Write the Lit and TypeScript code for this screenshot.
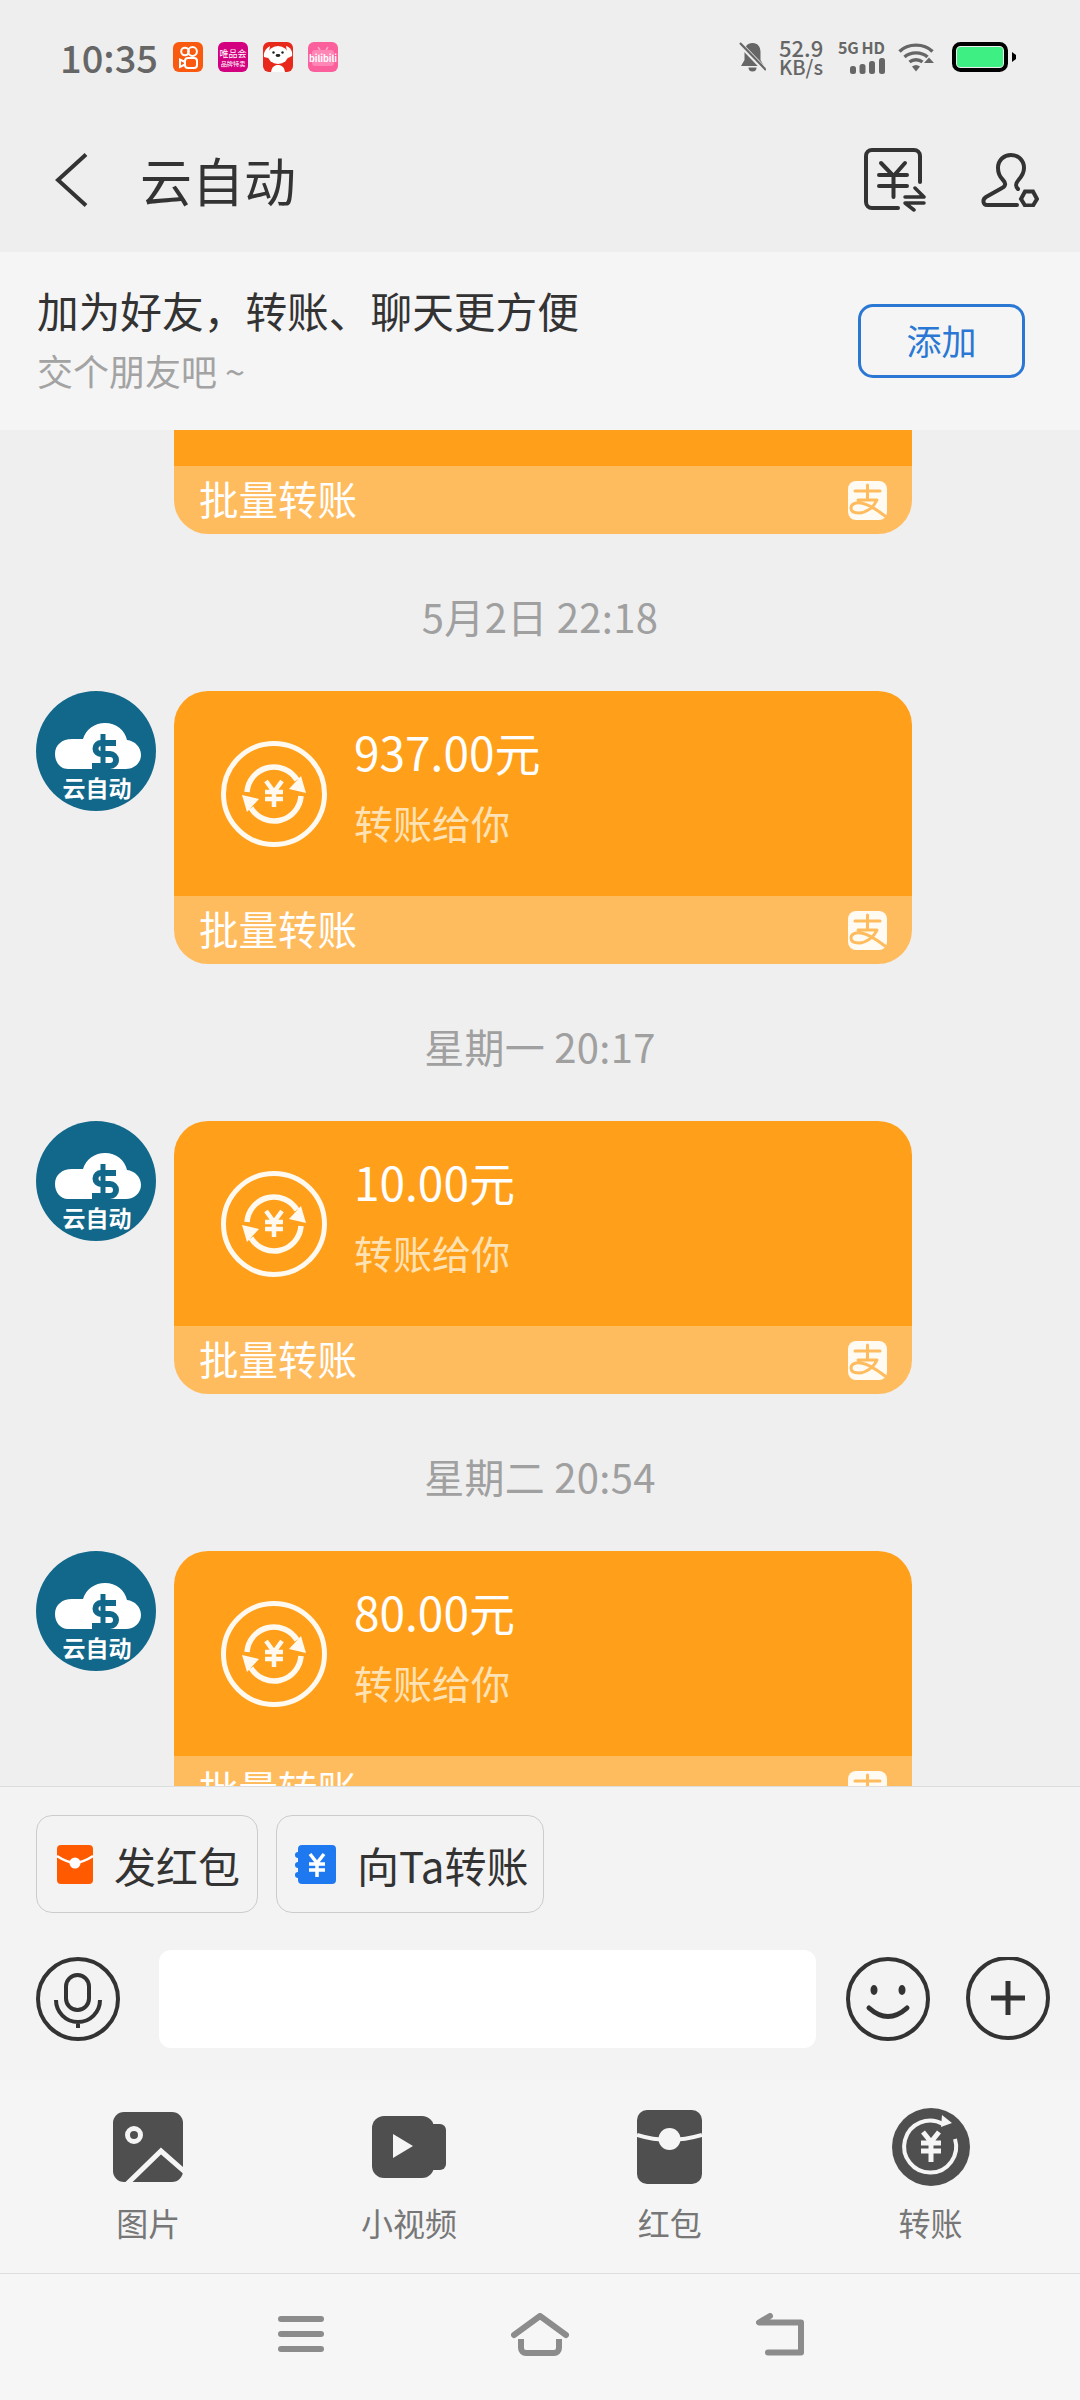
import { LitElement, css, html } from "lit";
import { customElement } from "lit/decorators.js";

const bannerTitle = "加为好友\uFF0C转账、聊天更方便";

const messages = [
  { time: "5月2日 22:18", amount: "937.00元" },
  { time: "星期一 20:17", amount: "10.00元" },
  { time: "星期二 20:54", amount: "80.00元" },
];

const avatar = html`
  <svg class="avatar" width="120" height="120" viewBox="0 0 120 120">
    <circle cx="60" cy="60" r="60" fill="#12688a" />
    <path d="M32 78C24 78 19 71 19 63C19 54 26 48 36 48H47C50 38 59 32 69 32C80 32 89 39 91 49C99 50 105 56 105 64C105 72 98 78 90 78Z" fill="#fff" />
    <path d="M80 52H65a5.5 5.500 0 0 0 0 11H74a6 6 0 0 1 0 12H56" fill="none" stroke="#12688a" stroke-width="6" />
    <path d="M67 43V85" stroke="#12688a" stroke-width="5" />
    <text x="61" y="106" font-size="23" font-weight="700" fill="#fff" text-anchor="middle">云自动</text>
  </svg>
`;

const coin = html`
  <svg class="coin" width="106" height="106" viewBox="0 0 106 106" fill="none" stroke="#fff9f0">
    <circle cx="53" cy="53" r="50.500" stroke-width="5" />
    <path d="M26 51A27 27 0 0 1 76 39" stroke-width="5.500" />
    <path d="M85 52L68 48L80 35Z" fill="#fff9f0" stroke="none" />
    <g transform="rotate(180 53 53)">
      <path d="M26 51A27 27 0 0 1 76 39" stroke-width="5.500" />
      <path d="M85 52L68 48L80 35Z" fill="#fff9f0" stroke="none" />
    </g>
    <path d="M45 40L53 51L61 40M44 51H62M44 58H62M53 51V66" stroke-width="4.500" />
  </svg>
`;

const alipay = html`
  <svg width="39" height="39" viewBox="0 0 39 39" fill="none">
    <rect width="39" height="39" rx="8" fill="#fffaf2" />
    <path d="M7 10H32M19.500 4V19M10 19H29C26 26 18 32 11 32C6 32 3 30 3 27C3 23 8 21 13 22C20 23 28 28 37 35" stroke="#ffbc5f" stroke-width="3" stroke-linecap="round" stroke-linejoin="round" />
  </svg>
`;

@customElement("app-root")
export class AppRoot extends LitElement {
  static styles = css`
    :host {
      display: block;
      width: 1080px;
      height: 2400px;
      overflow: hidden;
      background: #efefef;
      font-family: "Noto Sans CJK SC", "Noto Sans", sans-serif;
      color: #333;
    }
    svg {
      display: block;
      flex: none;
    }
    .status {
      height: 114px;
      background: #eee;
      display: flex;
      align-items: center;
      padding: 0 64px 0 60px;
      color: #666;
    }
    .clock {
      font-size: 38px;
      font-weight: 500;
      line-height: 1;
      width: 96px;
      margin-right: 17px;
    }
    .apps {
      display: flex;
      gap: 15px;
    }
    .indicators {
      margin-left: auto;
      display: flex;
      align-items: center;
    }
    .speed {
      margin: 0 14px 0 13px;
      width: 44px;
      text-align: center;
      white-space: nowrap;
    }
    .speed div {
      line-height: 19px;
      font-weight: 500;
    }
    .speed .rate {
      font-size: 22px;
    }
    .speed .unit {
      font-size: 20px;
    }
    .network {
      width: 48px;
      margin-right: 13px;
      display: flex;
      flex-direction: column;
      align-items: flex-end;
      gap: 3px;
    }
    .network span {
      font-size: 16px;
      font-weight: 700;
      line-height: 15px;
      white-space: nowrap;
      word-spacing: -1px;
    }
    .battery {
      margin-left: 18px;
    }
    .header {
      height: 138px;
      box-sizing: border-box;
      padding: 0 41px 6px 55px;
      background: #eee;
      display: flex;
      align-items: center;
    }
    .title {
      font-size: 52px;
      line-height: 60px;
      margin-left: 52px;
      flex: 1;
    }
    .header-icons {
      display: flex;
      align-items: center;
      gap: 55px;
    }
    .banner {
      height: 178px;
      box-sizing: border-box;
      padding: 0 55px 0 37px;
      background: #f5f5f5;
      display: flex;
      align-items: center;
      justify-content: space-between;
    }
    .banner-text {
      padding-bottom: 6px;
    }
    .banner-title {
      font-size: 41.700px;
      line-height: 54px;
    }
    .banner-sub {
      font-size: 36px;
      line-height: 48px;
      margin-top: 9px;
      color: #a3a3a3;
    }
    .add {
      width: 167px;
      height: 74px;
      box-sizing: border-box;
      border: 3px solid #2b78d4;
      border-radius: 15px;
      padding-bottom: 3px;
      color: #2b78d4;
      font-size: 35px;
      display: flex;
      align-items: center;
      justify-content: center;
    }
    .chat {
      height: 1356px;
      overflow: hidden;
      background: #efefef;
      padding-left: 36px;
    }
    .message {
      display: flex;
      gap: 18px;
    }
    .stamp {
      height: 157px;
      box-sizing: border-box;
      padding: 52px 36px 0 0;
      font-size: 40px;
      line-height: 60px;
      letter-spacing: 0.3px;
      text-align: center;
      color: #a0a0a0;
    }
    .bubble {
      width: 738px;
      border-radius: 34px;
      overflow: hidden;
      flex: none;
    }
    .bubble.cut {
      margin-left: 138px;
      border-radius: 0 0 34px 34px;
    }
    .body {
      height: 205px;
      box-sizing: border-box;
      padding: 0 0 0 47px;
      background: #ff9f1a;
      display: flex;
      align-items: center;
    }
    .cut .body {
      height: 36px;
    }
    .figures {
      margin-left: 27px;
      padding-bottom: 14px;
    }
    .amount {
      font-size: 46px;
      line-height: 60px;
      color: #fff;
    }
    .note {
      font-size: 39px;
      line-height: 60px;
      margin-top: 11px;
      color: #ffe2b3;
    }
    .foot {
      height: 68px;
      box-sizing: border-box;
      padding: 0 25px 0 25px;
      background: #ffbc5f;
      color: #fff;
      font-size: 39.500px;
      display: flex;
      align-items: center;
      justify-content: space-between;
    }
    .foot span {
      margin-bottom: 5px;
    }
    .composer {
      height: 294px;
      box-sizing: border-box;
      border-top: 1px solid #ddd;
      padding: 28px 30px 0 36px;
      background: #f3f3f3;
    }
    .chips {
      display: flex;
      gap: 18px;
    }
    .chip {
      height: 98px;
      box-sizing: border-box;
      padding: 0 17px 0 20px;
      border: 1px solid #ccc;
      border-radius: 16px;
      font-size: 42px;
      display: flex;
      align-items: center;
      gap: 21px;
    }
    .chip.blue {
      padding: 0 15px 0 17px;
      gap: 21px;
    }
    .entry {
      margin-top: 37px;
      display: flex;
      align-items: center;
    }
    .field {
      width: 657px;
      height: 98px;
      margin: 0 30px 0 39px;
      border-radius: 12px;
      background: #fff;
    }
    .plus {
      margin-left: 36px;
    }
    .tools {
      height: 193px;
      box-sizing: border-box;
      padding: 28px 19px 0 18px;
      background: #f5f5f5;
      display: grid;
      grid-template-columns: repeat(4, 1fr);
    }
    .tool {
      display: flex;
      flex-direction: column;
      align-items: center;
      font-size: 32px;
      line-height: 44px;
      color: #777;
    }
    .tool-icon {
      height: 78px;
      margin-bottom: 14px;
      display: flex;
      align-items: center;
    }
    .nav {
      height: 127px;
      box-sizing: border-box;
      border-top: 1px solid #ddd;
      padding: 0 0 6px 2px;
      background: #f6f6f6;
      display: flex;
      align-items: center;
      justify-content: center;
      gap: 187px;
    }
  `;

  private bubble(amount: string | null) {
    return html`
      <div class="bubble ${amount ? "" : "cut"}">
        <div class="body">
          ${amount
            ? html`${coin}
                <div class="figures">
                  <div class="amount">${amount}</div>
                  <div class="note">转账给你</div>
                </div>`
            : ""}
        </div>
        <div class="foot"><span>批量转账</span>${alipay}</div>
      </div>
    `;
  }

  private statusBar() {
    return html`
      <div class="status">
        <div class="clock">10:35</div>
        <div class="apps">
          <svg width="30" height="30" viewBox="0 0 30 30" fill="none" stroke="#fff" stroke-width="2">
            <rect width="30" height="30" rx="6" fill="#fa5a10" stroke="none" />
            <circle cx="12" cy="9.500" r="3.800" /><circle cx="19.500" cy="9.500" r="4.400" />
            <rect x="12" y="16" width="12" height="10" rx="3" />
            <path d="M12 20L7 17.500V25L12 22.500" />
          </svg>
          <svg width="30" height="30" viewBox="0 0 30 30">
            <rect width="30" height="30" rx="6" fill="#d3007f" />
            <text x="15" y="15" font-size="9" fill="#fff" text-anchor="middle">唯品会</text>
            <text x="15" y="24" font-size="6.200" fill="#fff" text-anchor="middle">品牌特卖</text>
          </svg>
          <svg width="30" height="30" viewBox="0 0 30 30">
            <rect width="30" height="30" rx="6" fill="#e8281a" />
            <path d="M7 4C3 6 0 11 1 15L5 16Z" fill="#fff" />
            <path d="M23 4C27 5 30 9 29 14L25 16Z" fill="#fff" />
            <ellipse cx="15" cy="13" rx="10.500" ry="9" fill="#fff" />
            <path d="M8 30C9 25 11 23 15 23S21 25 22 30Z" fill="#fff" />
            <circle cx="10.500" cy="10.500" r="1.200" fill="#222" /><circle cx="19.500" cy="10.500" r="1.200" fill="#222" />
            <ellipse cx="15" cy="13.500" rx="2.400" ry="1.400" fill="#222" />
          </svg>
          <svg width="30" height="30" viewBox="0 0 30 30">
            <rect width="30" height="30" rx="6" fill="#fb5f9c" />
            <path d="M10 5L12 8M20 5L18 8" stroke="#ffa5c8" stroke-width="1.500" />
            <rect x="4" y="8" width="22" height="16" rx="3" fill="#ff86b5" />
            <text x="15" y="20" font-size="9" font-weight="700" fill="#fff" text-anchor="middle">bilibili</text>
          </svg>
        </div>
        <div class="indicators">
          <svg width="27" height="30" viewBox="0 0 27 30">
            <path d="M13.500 1C8 1 5.500 5 5.500 10V18L2 24H25L21.500 18V10C21.500 5 19 1 13.500 1Z" fill="#666" />
            <path d="M9.500 25.500a4 4 0 0 0 8 0Z" fill="#666" />
            <path d="M0 1L27 29" stroke="#eee" stroke-width="5" />
            <path d="M1 1L27 28" stroke="#666" stroke-width="2.200" />
          </svg>
          <div class="speed">
            <div class="rate">52.9</div>
            <div class="unit">KB/s</div>
          </div>
          <div class="network">
            <span>5G HD</span>
            <svg width="35" height="16" viewBox="0 0 35 16" fill="#666">
              <rect y="8" width="6" height="8" rx="2.500" />
              <rect x="9.500" y="6" width="6" height="10" rx="2.500" />
              <rect x="19" y="3" width="6" height="13" rx="2.500" />
              <rect x="29" width="6" height="16" rx="2.500" />
            </svg>
          </div>
          <svg width="36" height="30" viewBox="0 0 36 30" fill="none" stroke="#666" stroke-width="3.400">
            <path d="M1.500 9.500C10 1 26 1 34.500 9.500" />
            <path d="M6.500 15C12.500 9.500 23.500 9.500 29.500 15" />
            <path d="M11.500 20C15 17 21 17 24.500 20" />
            <path d="M14 24.500L18 29.500L22 24.500Q18 21.500 14 24.500Z" fill="#666" stroke="none" />
            <path d="M26 21L31 15.500L36 21Z" fill="#666" stroke="none" />
          </svg>
          <svg class="battery" width="64" height="30" viewBox="0 0 64 30" fill="none">
            <rect x="2" y="2" width="52" height="26" rx="6.500" stroke="#000" stroke-width="4" />
            <rect x="5" y="5" width="46" height="20" rx="3.500" fill="#3ef084" />
            <path d="M60 10L64 13V17L60 20Z" fill="#000" />
          </svg>
        </div>
      </div>
    `;
  }

  private headerBar() {
    return html`
      <div class="header">
        <svg width="33" height="54" viewBox="0 0 33 54" fill="none">
          <path d="M31 1.500L3 27L31 52.500" stroke="#333" stroke-width="4" />
        </svg>
        <div class="title">云自动</div>
        <div class="header-icons">
          <svg width="62" height="64" viewBox="0 0 62 64" fill="none" stroke="#333" stroke-width="4" stroke-linecap="round">
            <path d="M56 34V8a6 6 0 0 0-6-6H8a6 6 0 0 0-6 6V54a6 6 0 0 0 6 6H34" />
            <path d="M17 15L29.500 28L41 15M15 27H43M15 38H43M29.500 28V49" />
            <path d="M51 40L60 49H41M60 55H41L50 62" stroke-width="3.500" stroke-linejoin="round" />
          </svg>
          <svg width="58" height="54" viewBox="0 0 58 54" fill="none" stroke="#333" stroke-width="4" stroke-linecap="round">
            <path d="M37 36C34 33 34.500 30.500 37.500 27C41 23 43 20 43 15C43 7 37 2 30 2S17 7 17 15C17 21 19 24 22 27C25 30 25 33 21 35L5 44C1 46.500 2 52 6 52H36" />
            <path d="M44 38.500H52L56 46L52 52.500H44L40 46Z" />
          </svg>
        </div>
      </div>
    `;
  }

  private composer() {
    return html`
      <div class="composer">
        <div class="chips">
          <div class="chip">
            <svg width="36" height="39" viewBox="0 0 36 39">
              <rect width="36" height="39" rx="4" fill="#ff5a00" />
              <path d="M0 11Q9 17 18 18Q27 17 36 11" fill="none" stroke="#fff" stroke-width="2.500" />
              <circle cx="18" cy="18" r="5.500" fill="#fff" />
            </svg>
            <span>发红包</span>
          </div>
          <div class="chip blue">
            <svg width="42" height="39" viewBox="0 0 42 39">
              <path d="M8 0H38a4 4 0 0 1 4 4V35a4 4 0 0 1-4 4H8a4 4 0 0 1-4-4V33a3 3 0 0 1 0-6V23a3 3 0 0 1 0-6V13a3 3 0 0 1 0-6V4a4 4 0 0 1 4-4Z" fill="#1e78f0" />
              <path d="M16 9L23 18L30 9M15 19H31M15 25H31M23 18V32" fill="none" stroke="#fff" stroke-width="3.500" />
            </svg>
            <span>向Ta转账</span>
          </div>
        </div>
        <div class="entry">
          <svg width="84" height="84" viewBox="0 0 84 84" fill="none" stroke="#333" stroke-width="4">
            <circle cx="42" cy="42" r="40" />
            <rect x="30" y="18" width="23" height="35" rx="11.500" />
            <path d="M20 43A22 22 0 0 0 64 43M42 65V71" />
          </svg>
          <div class="field"></div>
          <svg width="84" height="84" viewBox="0 0 84 84" fill="none" stroke="#333" stroke-width="4">
            <circle cx="42" cy="42" r="40" />
            <ellipse cx="28" cy="33" rx="3.500" ry="5" fill="#333" stroke="none" />
            <ellipse cx="56" cy="33" rx="3.500" ry="5" fill="#333" stroke="none" />
            <path d="M23 51Q42 68 61 51" stroke-width="5" stroke-linecap="round" />
          </svg>
          <svg class="plus" width="84" height="84" viewBox="0 0 84 84" fill="none" stroke="#333" stroke-width="4">
            <circle cx="42" cy="41" r="40" />
            <path d="M25 41H59M42 24V58" stroke-width="5" />
          </svg>
        </div>
      </div>
    `;
  }

  private tools() {
    return html`
      <div class="tools">
        <div class="tool">
          <div class="tool-icon">
            <svg width="70" height="70" viewBox="0 0 70 70" fill="none">
              <rect width="70" height="70" rx="11" fill="#4f4f4f" />
              <circle cx="21" cy="23" r="6.500" stroke="#f5f5f5" stroke-width="5" />
              <path d="M14 72L48 39L72 60" stroke="#f5f5f5" stroke-width="5" />
            </svg>
          </div>
          图片
        </div>
        <div class="tool">
          <div class="tool-icon">
            <svg width="74" height="62" viewBox="0 0 74 62">
              <rect width="62" height="62" rx="12" fill="#4f4f4f" />
              <rect x="50" y="8" width="24" height="46" rx="6" fill="#4f4f4f" />
              <path d="M21 18L41 30L21 42Z" fill="#f5f5f5" />
            </svg>
          </div>
          小视频
        </div>
        <div class="tool">
          <div class="tool-icon">
            <svg width="65" height="74" viewBox="0 0 65 74">
              <rect width="65" height="74" rx="10" fill="#4f4f4f" />
              <path d="M0 25Q16 30 32 30Q48 30 65 25" fill="none" stroke="#f5f5f5" stroke-width="4" />
              <circle cx="32.500" cy="29" r="11" fill="#f5f5f5" />
            </svg>
          </div>
          红包
        </div>
        <div class="tool">
          <div class="tool-icon">
            <svg width="78" height="78" viewBox="0 0 78 78" fill="none">
              <circle cx="39" cy="39" r="39" fill="#4f4f4f" />
              <path d="M63 31A26 26 0 1 1 51 16" stroke="#f5f5f5" stroke-width="4" />
              <path d="M50 7L60 15L49 19Z" fill="#f5f5f5" />
              <path d="M31 24L39 34L47 24M29 35H49M29 43H49M39 34V54" stroke="#f5f5f5" stroke-width="5" />
            </svg>
          </div>
          转账
        </div>
      </div>
    `;
  }

  private navBar() {
    return html`
      <div class="nav">
        <svg width="46" height="36" viewBox="0 0 46 36" fill="#8c8c8c">
          <rect width="46" height="6" rx="3" /><rect y="15" width="46" height="6" rx="3" /><rect y="30" width="46" height="6" rx="3" />
        </svg>
        <svg width="58" height="43" viewBox="0 0 58 43" fill="none" stroke="#8c8c8c" stroke-width="6">
          <path d="M3 22L29 3L55 22" stroke-linecap="round" stroke-linejoin="round" />
          <path d="M10 26V35a5 5 0 0 0 5 5H43a5 5 0 0 0 5-5V26" />
        </svg>
        <svg width="48" height="43" viewBox="0 0 48 43" fill="none" stroke="#8c8c8c" stroke-width="6" stroke-linecap="round" stroke-linejoin="round">
          <path d="M14 3L3 9.500H45V39.500H12" />
        </svg>
      </div>
    `;
  }

  render() {
    return html`
      ${this.statusBar()} ${this.headerBar()}
      <div class="banner">
        <div class="banner-text">
          <div class="banner-title">${bannerTitle}</div>
          <div class="banner-sub">交个朋友吧 ~</div>
        </div>
        <div class="add">添加</div>
      </div>
      <div class="chat">
        ${this.bubble(null)}
        ${messages.map(
          (m) => html`
            <div class="stamp">${m.time}</div>
            <div class="message">${avatar}${this.bubble(m.amount)}</div>
          `
        )}
      </div>
      ${this.composer()} ${this.tools()} ${this.navBar()}
    `;
  }
}
